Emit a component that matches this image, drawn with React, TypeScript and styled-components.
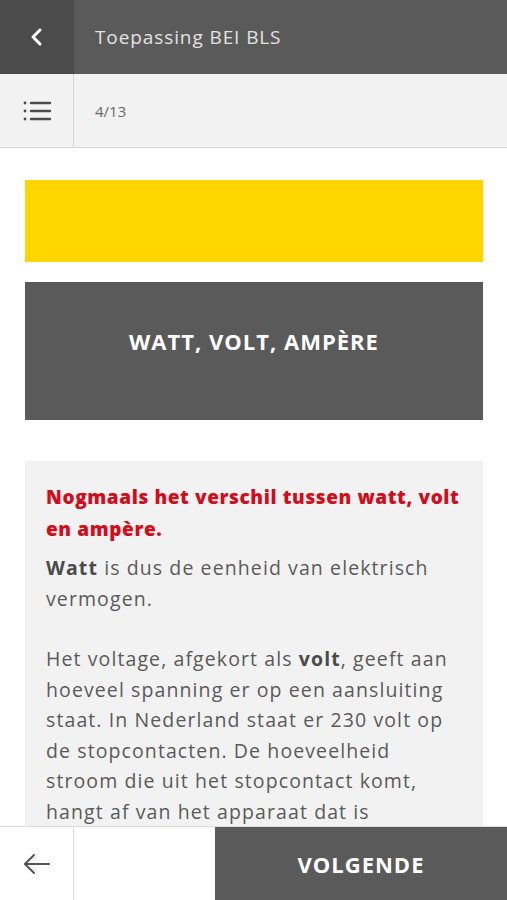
import React from 'react';
import styled, {createGlobalStyle} from "styled-components";

const GlobalStyle = createGlobalStyle`
    html, body {
        margin: 0;
        padding: 0;
        background: #ffffff;
    }
    body {
        font-family: "Open Sans", "Noto Sans", sans-serif;
    }
    * {
        box-sizing: border-box;
    }
`

const ListIcon = () => (
    <svg width="30" height="24" viewBox="0 0 30 24" fill="none" stroke="#4a4a4a" strokeLinecap="round">
        <circle cx="3" cy="4" r="1.4" fill="#4a4a4a" stroke="none"/>
        <circle cx="3" cy="12" r="1.4" fill="#4a4a4a" stroke="none"/>
        <circle cx="3" cy="20" r="1.4" fill="#4a4a4a" stroke="none"/>
        <line x1="9" y1="4" x2="28" y2="4" strokeWidth="2.4"/>
        <line x1="9" y1="12" x2="28" y2="12" strokeWidth="2.4"/>
        <line x1="9" y1="20" x2="28" y2="20" strokeWidth="2.4"/>
    </svg>
);

const ChevronLeft = () => (
    <svg width="16" height="20" viewBox="0 0 16 20" fill="none" stroke="#ffffff" strokeWidth="3" strokeLinecap="round" strokeLinejoin="round">
        <polyline points="11,3 4,10 11,17"/>
    </svg>
);

const ArrowLeft = () => (
    <svg width="28" height="22" viewBox="0 0 28 22" fill="none" stroke="#555555" strokeWidth="2" strokeLinecap="round" strokeLinejoin="round">
        <line x1="2" y1="11" x2="26" y2="11"/>
        <polyline points="11,2 2,11 11,20"/>
    </svg>
);

export default function App() {
    return (
        <Page>
            <GlobalStyle/>
            <Header>
                <HeaderButton><ChevronLeft/></HeaderButton>
                <HeaderTitle>Toepassing BEI BLS</HeaderTitle>
            </Header>
            <SubBar>
                <SubButton><ListIcon/></SubButton>
                <Counter>4/13</Counter>
            </SubBar>
            <Content>
                <YellowBlock/>
                <TitleBlock>WATT, VOLT, AMPÈRE</TitleBlock>
                <InfoBox>
                    <InfoHeading>Nogmaals het verschil tussen watt, volt en ampère.</InfoHeading>
                    <Paragraph>
                        <b>Watt</b> is dus de eenheid van elektrisch vermogen.
                    </Paragraph>
                    <Paragraph>
                        Het voltage, afgekort als <b>volt</b>, geeft aan hoeveel spanning er op een aansluiting
                        staat. In Nederland staat er 230 volt op de stopcontacten. De hoeveelheid stroom die uit
                        het stopcontact komt, hangt af van het apparaat dat is aangesloten.
                    </Paragraph>
                </InfoBox>
            </Content>
            <Footer>
                <FooterBack><ArrowLeft/></FooterBack>
                <FooterSpacer/>
                <NextButton>VOLGENDE</NextButton>
            </Footer>
        </Page>
    );
}

const Page = styled.div`
    width: 507px;
    height: 900px;
    display: flex;
    flex-direction: column;
    overflow: hidden;
    background: #ffffff;
`

const Header = styled.header`
    height: 74px;
    flex-shrink: 0;
    display: flex;
    align-items: center;
    background: #5a5a5a;
`

const HeaderButton = styled.div`
    width: 74px;
    height: 100%;
    display: flex;
    align-items: center;
    justify-content: center;
    background: #4b4b4b;
`

const HeaderTitle = styled.h1`
    margin: 0 0 0 21px;
    font-size: 19px;
    font-weight: 400;
    color: #e2e2e2;
    letter-spacing: 0.9px;
`

const SubBar = styled.div`
    height: 74px;
    flex-shrink: 0;
    display: flex;
    align-items: center;
    background: #f2f2f2;
    border-bottom: 1px solid #d6d6d6;
`

const SubButton = styled.div`
    width: 74px;
    height: 100%;
    display: flex;
    align-items: center;
    justify-content: center;
    border-right: 1px solid #d6d6d6;
`

const Counter = styled.span`
    margin-left: 21px;
    font-size: 15px;
    color: #6a6a6a;
`

const Content = styled.main`
    flex: 1;
    overflow: hidden;
    padding: 32px 24px 0 25px;
    display: flex;
    flex-direction: column;
`

const YellowBlock = styled.div`
    height: 82px;
    background: #fed500;
    flex-shrink: 0;
`

const TitleBlock = styled.h2`
    margin: 20px 0 0;
    height: 138px;
    flex-shrink: 0;
    display: flex;
    align-items: center;
    justify-content: center;
    padding-bottom: 20px;
    background: #5a5a5a;
    color: #ffffff;
    font-size: 22px;
    font-weight: 700;
    letter-spacing: 1px;
`

const InfoBox = styled.section`
    margin-top: 41px;
    flex-shrink: 0;
    background: #f2f2f2;
    padding: 20px 16px 40px 21px;
`

const InfoHeading = styled.h3`
    margin: 0 0 8px;
    font-size: 19px;
    font-weight: 800;
    line-height: 32px;
    letter-spacing: 0.6px;
    color: #d10d1c;
`

const Paragraph = styled.p`
    margin: 0 0 30px;
    font-size: 19.5px;
    line-height: 30.5px;
    letter-spacing: 1.1px;
    color: #5a5a5a;
    b {
        font-weight: 700;
        color: #4a4a4a;
    }
`

const Footer = styled.footer`
    height: 74px;
    flex-shrink: 0;
    display: flex;
    background: #ffffff;
    border-top: 1px solid #dcdcdc;
`

const FooterBack = styled.div`
    width: 74px;
    display: flex;
    align-items: center;
    justify-content: center;
    border-right: 1px solid #dcdcdc;
`

const FooterSpacer = styled.div`
    width: 141px;
`

const NextButton = styled.button`
    flex: 1;
    border: none;
    margin: 0;
    background: #5a5a5a;
    color: #ffffff;
    font-family: "Open Sans", "Noto Sans", sans-serif;
    font-size: 22px;
    font-weight: 700;
    letter-spacing: 1px;
    cursor: pointer;
`
